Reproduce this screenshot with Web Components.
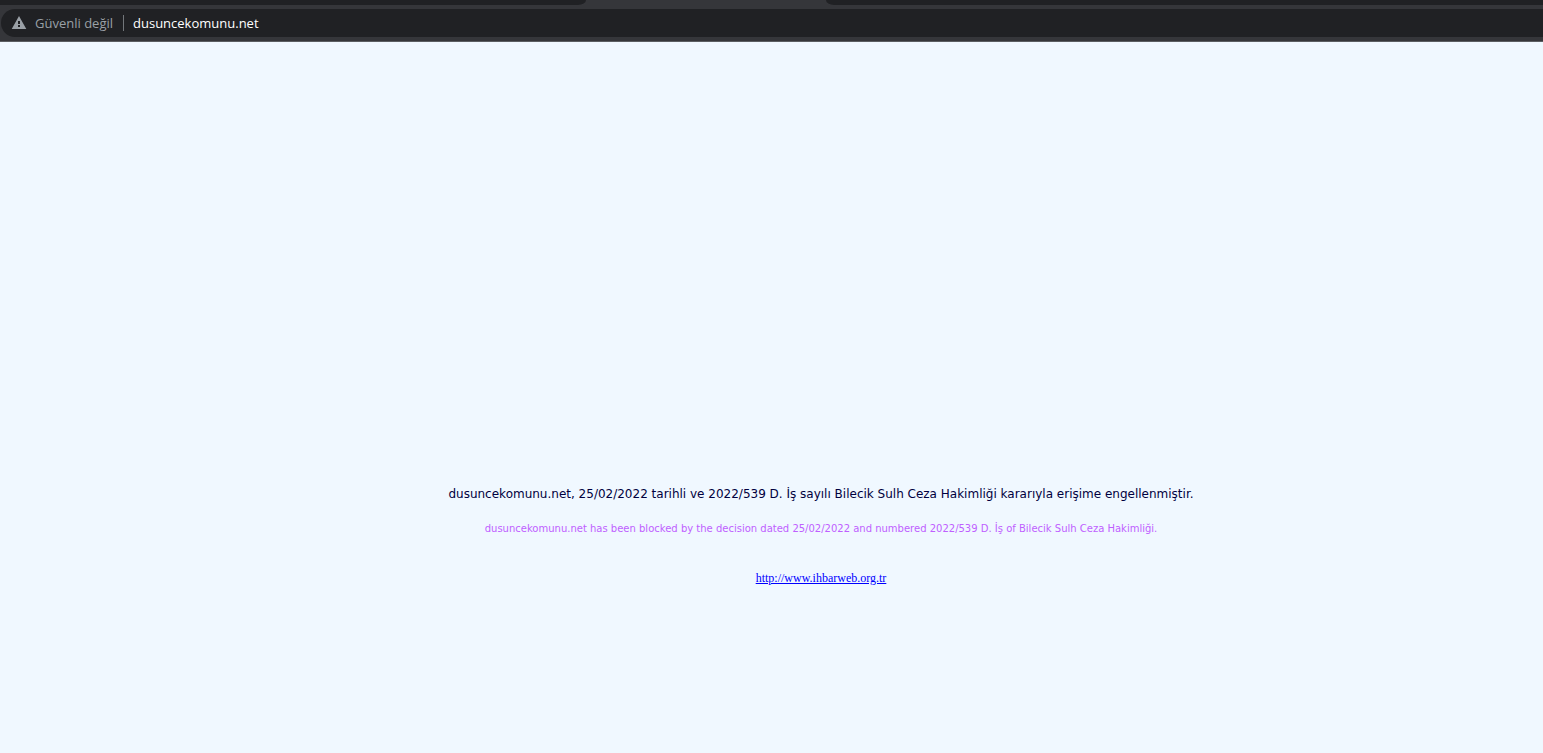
<!DOCTYPE html>
<html lang="tr">
<head>
<meta charset="utf-8">
<meta name="viewport" content="width=device-width, initial-scale=1">
<title>dusuncekomunu.net</title>
<style>
  body {
    margin: 0;
    min-height: 100vh;
    display: flex;
    flex-direction: column;
    background: #f0f8ff;
  }
</style>
</head>
<body>
<tab-strip></tab-strip>
<address-bar url="dusuncekomunu.net">Güvenli değil</address-bar>
<block-notice href="http://www.ihbarweb.org.tr">
  dusuncekomunu.net, 25/02/2022 tarihli ve 2022/539 D. İş sayılı Bilecik Sulh Ceza Hakimliği kararıyla erişime engellenmiştir.
  <span slot="translation" lang="en">dusuncekomunu.net has been blocked by the decision dated 25/02/2022 and numbered 2022/539 D. İş of Bilecik Sulh Ceza Hakimliği.</span>
</block-notice>

<script>
class TabStrip extends HTMLElement {
  constructor() {
    super();
    this.root = this.attachShadow({mode: 'open'});
  }

  connectedCallback() {
    // only the bottom edge of the strip shows above the toolbar
    this.root.innerHTML = `
    <style>
      :host {
        display: grid;
        grid-template-columns: 76fr 31fr 93fr;
        height: 5px;
        background: #35363a;
      }
      div {
        background: #202124;
      }
      .before {
        border-bottom-right-radius: 8px 5px;
      }
      .active {
        background: none;
      }
      .after {
        border-bottom-left-radius: 8px 5px;
      }
    </style>
    <div class="before"></div>
    <div class="active"></div>
    <div class="after"></div>`;
  }
}

class AddressBar extends HTMLElement {
  constructor() {
    super();
    this.root = this.attachShadow({mode: 'open'});
  }

  connectedCallback() {
    this.root.innerHTML = `
    <style>
      :host {
        display: block;
        padding: 4px 0 4px 1px;
        background: #35363a;
        border-bottom: 1px solid #5b5e62;
        font: 13px/20px "Open Sans", "Noto Sans", sans-serif;
      }
      form {
        display: flex;
        align-items: center;
        height: 28px;
        margin: 0;
        padding-left: 10px;
        border-radius: 14px 0 0 14px;
        background: #202124;
      }
      button {
        display: flex;
        align-items: center;
        gap: 8px;
        padding: 0 10px 0 0;
        border: 0;
        background: none;
        color: #9aa0a6;
        font: inherit;
      }
      .divider {
        width: 1px;
        height: 16px;
        background: #73777b;
      }
      input {
        flex: 1;
        min-width: 0;
        margin: 0;
        padding: 0 0 0 9px;
        border: 0;
        outline: 0;
        background: none;
        color: #fff;
        font: inherit;
      }
    </style>
    <form>
      <button type="button">
        <svg width="16" height="16" viewBox="0 0 16 16" aria-hidden="true">
          <path fill="#9aa0a6" fill-rule="evenodd" d="M8 1 15.300 14H.7ZM7 6v3h2V6ZM7 10v2h2v-2Z"/>
        </svg>
        <slot></slot>
      </button>
      <span class="divider"></span>
      <input type="text" aria-label="Adres" spellcheck="false" value="${this.getAttribute('url')}">
    </form>`;
  }
}

class BlockNotice extends HTMLElement {
  constructor() {
    super();
    this.root = this.attachShadow({mode: 'open'});
  }

  connectedCallback() {
    let href = this.getAttribute('href');

    this.root.innerHTML = `
    <style>
      :host {
        display: block;
        padding: 442px 0 40px 99px;
        text-align: center;
        font-family: Verdana, "DejaVu Sans", sans-serif;
      }
      p {
        margin: 0;
      }
      .decision {
        color: #000040;
        font-size: 12px;
        line-height: 20px;
      }
      .translation {
        margin-top: 16px;
        color: #bf60ff;
        font-size: 10px;
        line-height: 18px;
      }
      .report {
        margin-top: 30px;
        font: 12px/20px "Liberation Serif", serif;
      }
      a {
        color: #0000ff;
      }
    </style>
    <p class="decision"><slot></slot></p>
    <p class="translation"><slot name="translation"></slot></p>
    <p class="report"><a href="${href}">${href}</a></p>`;
  }
}

customElements.define('tab-strip', TabStrip);
customElements.define('address-bar', AddressBar);
customElements.define('block-notice', BlockNotice);
</script>
</body>
</html>
